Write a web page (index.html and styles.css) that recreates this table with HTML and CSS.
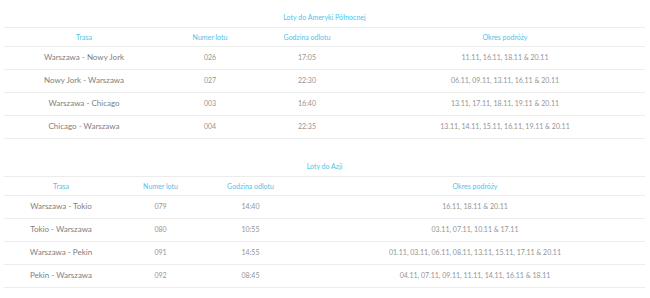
FILE: index.html
```html
<!DOCTYPE html>
<html lang="pl">
<head>
<meta charset="utf-8">
<link rel="stylesheet" href="styles.css">
</head>
<body>
<div class="page">
  <table class="flights flights-america">
    <caption>Loty do Ameryki Północnej</caption>
    <colgroup><col class="c1"><col class="c2"><col class="c3"><col></colgroup>
    <thead>
      <tr><th>Trasa</th><th>Numer lotu</th><th>Godzina odlotu</th><th class="last">Okres podróży</th></tr>
    </thead>
    <tbody>
      <tr><td class="route">Warszawa - Nowy Jork</td><td>026</td><td>17:05</td><td class="last">11.11, 16.11, 18.11 &amp; 20.11</td></tr>
      <tr><td class="route">Nowy Jork - Warszawa</td><td>027</td><td>22:30</td><td class="last">06.11, 09.11, 13.11, 16.11 &amp; 20.11</td></tr>
      <tr><td class="route">Warszawa - Chicago</td><td>003</td><td>16:40</td><td class="last">13.11, 17.11, 18.11, 19.11 &amp; 20.11</td></tr>
      <tr><td class="route">Chicago - Warszawa</td><td>004</td><td>22:35</td><td class="last">13.11, 14.11, 15.11, 16.11, 19.11 &amp; 20.11</td></tr>
    </tbody>
  </table>

  <table class="flights flights-asia">
    <caption>Loty do Azji</caption>
    <colgroup><col class="c1"><col class="c2"><col class="c3"><col></colgroup>
    <thead>
      <tr><th>Trasa</th><th>Numer lotu</th><th>Godzina odlotu</th><th class="last">Okres podróży</th></tr>
    </thead>
    <tbody>
      <tr><td class="route">Warszawa - Tokio</td><td>079</td><td>14:40</td><td class="last">16.11, 18.11 &amp; 20.11</td></tr>
      <tr><td class="route">Tokio - Warszawa</td><td>080</td><td>10:55</td><td class="last">03.11, 07.11, 10.11 &amp; 17.11</td></tr>
      <tr><td class="route">Warszawa - Pekin</td><td>091</td><td>14:55</td><td class="last">01.11, 03.11, 06.11, 08.11, 13.11, 15.11, 17.11 &amp; 20.11</td></tr>
      <tr><td class="route">Pekin - Warszawa</td><td>092</td><td>08:45</td><td class="last">04.11, 07.11, 09.11, 11.11, 14.11, 16.11 &amp; 18.11</td></tr>
    </tbody>
  </table>
</div>
</body>
</html>
```

FILE: styles.css
```css
html, body {
  margin: 0;
  padding: 0;
  background: #ffffff;
}

.page {
  padding: 9px 5px 0 4px;
  display: flex;
  flex-direction: column;
  gap: 19px;
  font-family: Lato, "Open Sans", sans-serif;
}

.flights {
  width: 100%;
  border-collapse: collapse;
  table-layout: fixed;
}

.flights caption {
  font-size: 7px;
  color: #4fc3ea;
  height: 18px;
  line-height: 16px;
  text-align: center;
}

.flights th {
  font-size: 7px;
  font-weight: normal;
  color: #4fc3ea;
  height: 18px;
  padding: 0;
  text-align: center;
  vertical-align: middle;
  border-top: 1px solid #ececec;
  border-bottom: 1px solid #ececec;
}

.flights td {
  font-size: 7px;
  color: #949494;
  height: 20px;
  padding: 0 0 2px 0;
  text-align: center;
  vertical-align: middle;
  border-bottom: 1px solid #ececec;
}

.flights td.route {
  font-size: 8px;
  font-weight: normal;
  color: #808080;
}

.flights .last {
  padding-left: 7px;
}

.flights-america .c1 { width: 160px; }
.flights-america .c2 { width: 92px; }
.flights-america .c3 { width: 102px; }

.flights-asia .c1 { width: 114px; }
.flights-asia .c2 { width: 85px; }
.flights-asia .c3 { width: 95px; }
```
